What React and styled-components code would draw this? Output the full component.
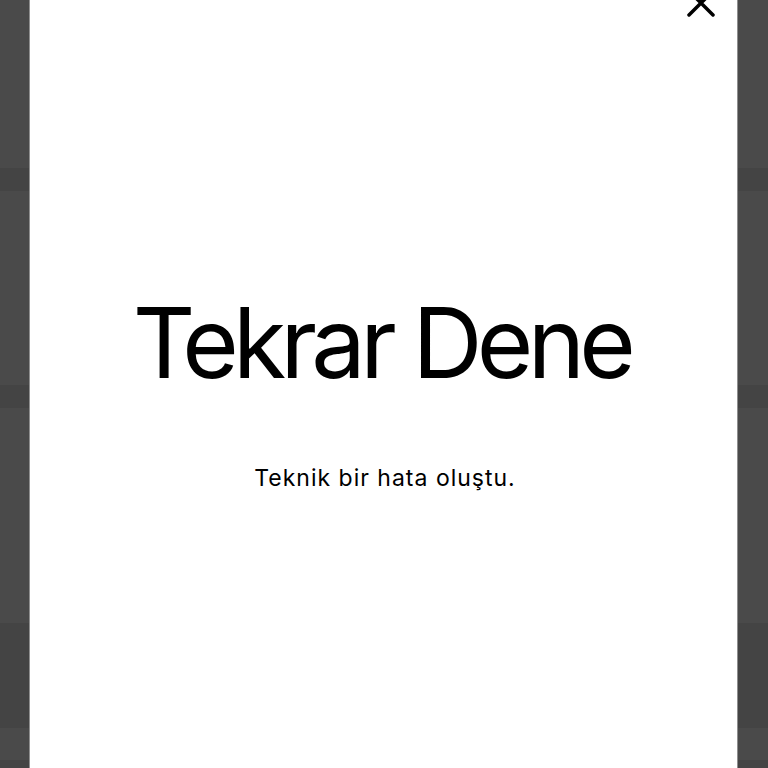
import React from "react";
import styled, { createGlobalStyle } from "styled-components";

const GlobalStyle = createGlobalStyle`
  html, body {
    margin: 0;
    padding: 0;
    width: 768px;
    height: 768px;
    overflow: hidden;
    background: #4a4a4a;
  }
  #root {
    height: 768px;
  }
`;

const Screen = styled.div`
  position: relative;
  width: 768px;
  height: 768px;
  overflow: hidden;
  background: #4a4a4a;
`;

const Backdrop = styled.div`
  display: flex;
  flex-direction: column;
  height: 100%;
`;

const BackRow = styled.div`
  height: ${(p) => p.h}px;
  background: ${(p) => (p.dark ? "#444444" : "#4a4a4a")};
  flex-shrink: 0;
`;

const Sheet = styled.div`
  position: absolute;
  top: 0;
  bottom: 0;
  left: 29px;
  width: 709px;
  background: #ffffff;
  border-left: 1px solid #8f8f8f;
  border-right: 1px solid #8f8f8f;
  display: flex;
  flex-direction: column;
  align-items: center;
  padding-top: 294px;
  box-sizing: border-box;
  font-family: Inter, "Noto Sans", "Liberation Sans", sans-serif;
  color: #000;
`;

const Title = styled.h1`
  margin: 0 4px 0 0;
  font-size: 97px;
  line-height: 97px;
  font-weight: 400;
  letter-spacing: -5.7px;
  white-space: nowrap;
`;

const Message = styled.p`
  margin: 76px 0 0 3px;
  font-size: 23px;
  line-height: 23px;
  font-weight: 400;
  letter-spacing: 1px;
  color: #000;
  white-space: nowrap;
`;

const CloseButton = styled.button`
  position: absolute;
  top: -11px;
  right: 21px;
  width: 30px;
  height: 28px;
  padding: 0;
  border: none;
  background: transparent;
  cursor: pointer;
  display: flex;
  align-items: center;
  justify-content: center;
`;

const rows = [
  { h: 168, dark: false },
  { h: 23, dark: true },
  { h: 194, dark: false },
  { h: 23, dark: true },
  { h: 215, dark: false },
  { h: 105, dark: true },
  { h: 32, dark: false },
  { h: 8, dark: true },
];

export default function App() {
  return (
    <>
      <GlobalStyle />
      <Screen>
        <Backdrop>
          {rows.map((r, i) => (
            <BackRow key={i} h={r.h} dark={r.dark} />
          ))}
        </Backdrop>
        <Sheet>
          <CloseButton aria-label="Kapat">
            <svg width="30" height="28" viewBox="0 0 30 28">
              <path
                d="M3 2 L27 26 M27 2 L3 26"
                stroke="#000"
                strokeWidth="3.5"
                strokeLinecap="round"
              />
            </svg>
          </CloseButton>
          <Title>Tekrar Dene</Title>
          <Message>Teknik bir hata oluştu.</Message>
        </Sheet>
      </Screen>
    </>
  );
}
